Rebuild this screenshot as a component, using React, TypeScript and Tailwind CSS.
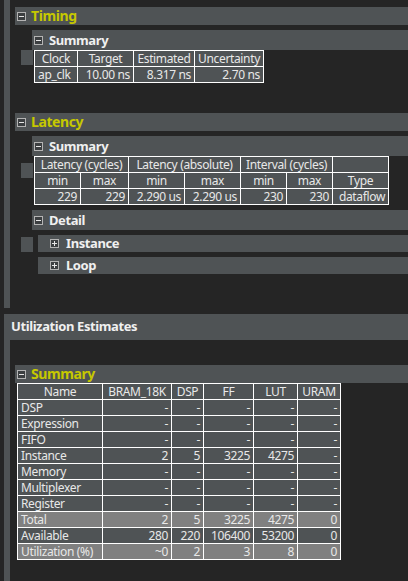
import React from 'react';

const font = { fontFamily: '"Noto Sans", "Liberation Sans", sans-serif' };

function Toggle({ open }: { open: boolean }) {
  return (
    <svg width="9" height="9" viewBox="0 0 9 9" className="shrink-0">
      <rect x="0.5" y="0.5" width="8" height="8" fill="#3c3f41" stroke="#b4b4b4" />
      <line x1="2" y1="4.5" x2="7" y2="4.5" stroke="#e6e6e6" />
      {!open && <line x1="4.5" y1="2" x2="4.5" y2="7" stroke="#e6e6e6" />}
    </svg>
  );
}

function SectionHead({ title }: { title: string }) {
  return (
    <div className="h-[18px] bg-[#4f5355] flex items-center pl-[2px]">
      <Toggle open />
      <span className="ml-[5px] text-[14px] font-bold leading-none tracking-[-0.4px] text-[#c6c800]">{title}</span>
    </div>
  );
}

function SubHead({ title }: { title: string }) {
  return (
    <div className="h-[20px] bg-[#4f5355] flex items-center pl-[2px]">
      <Toggle open />
      <span className="ml-[6px] text-[13px] font-bold text-[#f0f0f0] leading-none tracking-[-0.4px]">{title}</span>
    </div>
  );
}

function Cell({ children, align = 'r', light = false, span = false }: { children?: React.ReactNode; align?: 'l' | 'c' | 'r'; light?: boolean; span?: boolean }) {
  const a = align === 'l' ? 'text-left' : align === 'c' ? 'text-center' : 'text-right';
  return (
    <div className={`${light ? 'bg-[#808080]' : 'bg-[#4f5355]'} ${span ? 'col-span-2' : ''} ${a} h-[15px] leading-[15px] text-[12px] tracking-[-0.35px] px-[3px] text-[#e8e8e8] whitespace-nowrap overflow-hidden`}>
      {children}
    </div>
  );
}

const utilRows: [string, string, string, string, string, string, boolean][] = [
  ['DSP', '-', '-', '-', '-', '-', false],
  ['Expression', '-', '-', '-', '-', '-', false],
  ['FIFO', '-', '-', '-', '-', '-', false],
  ['Instance', '2', '5', '3225', '4275', '-', false],
  ['Memory', '-', '-', '-', '-', '-', false],
  ['Multiplexer', '-', '-', '-', '-', '-', false],
  ['Register', '-', '-', '-', '-', '-', false],
  ['Total', '2', '5', '3225', '4275', '0', true],
  ['Available', '280', '220', '106400', '53200', '0', false],
  ['Utilization (%)', '~0', '2', '3', '8', '0', true],
];

export default function App() {
  return (
    <div className="w-[408px] h-[581px] bg-[#252525] overflow-hidden" style={font}>
      {/* Performance block */}
      <div className="flex h-[308px]">
        <div className="ml-1 w-[6px] bg-[#4f5355]" />
        <div className="flex-1 pl-[5px] pt-[7px]">
          <SectionHead title="Timing" />
          <div className="mt-[5px] ml-[17px]">
            <SubHead title="Summary" />
          </div>
          <div className="flex items-start">
            <div className="ml-[6px] w-[12px] h-[15px] bg-[#4f5355]" />
            <div className="ml-px grid grid-cols-[42px_55px_60px_68px] gap-px p-px bg-white">
              <Cell align="c">Clock</Cell>
              <Cell align="c">Target</Cell>
              <Cell align="c">Estimated</Cell>
              <Cell align="c">Uncertainty</Cell>
              <Cell align="l">ap_clk</Cell>
              <Cell>10.00 ns</Cell>
              <Cell>8.317 ns</Cell>
              <Cell>2.70 ns</Cell>
            </div>
          </div>

          <div className="mt-[30px]">
            <SectionHead title="Latency" />
          </div>
          <div className="mt-[5px] ml-[17px]">
            <SubHead title="Summary" />
          </div>
          <div className="flex items-start">
            <div className="ml-[6px] mt-[7px] w-[12px] h-[15px] bg-[#4f5355]" />
            <div className="ml-px grid grid-cols-[45px_47px_55px_55px_45px_45px_55px] gap-px p-px bg-white">
              <Cell align="c" span>Latency (cycles)</Cell>
              <Cell align="c" span>Latency (absolute)</Cell>
              <Cell align="c" span>Interval (cycles)</Cell>
              <Cell />
              <Cell align="c">min</Cell>
              <Cell align="c">max</Cell>
              <Cell align="c">min</Cell>
              <Cell align="c">max</Cell>
              <Cell align="c">min</Cell>
              <Cell align="c">max</Cell>
              <Cell align="c">Type</Cell>
              <Cell>229</Cell>
              <Cell>229</Cell>
              <Cell>2.290 us</Cell>
              <Cell>2.290 us</Cell>
              <Cell>230</Cell>
              <Cell>230</Cell>
              <Cell>dataflow</Cell>
            </div>
          </div>

          <div className="mt-[5px] ml-[17px]">
            <SubHead title="Detail" />
          </div>
          <div className="mt-[5px] flex items-start">
            <div className="ml-[6px] mt-[2px] w-[12px] h-[15px] bg-[#4f5355]" />
            <div className="ml-[5px] flex-1 h-[17px] bg-[#4f5355] flex items-center pl-[12px]">
              <Toggle open={false} />
              <span className="ml-[7px] text-[13px] font-bold text-[#f0f0f0] leading-none tracking-[-0.4px]">Instance</span>
            </div>
          </div>
          <div className="mt-[5px] ml-[23px] h-[17px] bg-[#4f5355] flex items-center pl-[12px]">
            <Toggle open={false} />
            <span className="ml-[7px] text-[13px] font-bold text-[#f0f0f0] leading-none tracking-[-0.4px]">Loop</span>
          </div>
        </div>
      </div>

      {/* Utilization */}
      <div className="mt-[6px] ml-1 h-[26px] bg-[#4f5355] flex items-center pl-[7px]">
        <span className="text-[13px] font-bold text-[#f0f0f0] tracking-[-0.4px]">Utilization Estimates</span>
      </div>
      <div className="flex h-[241px]">
        <div className="ml-1 w-[6px] bg-[#4f5355]" />
        <div className="flex-1 pl-[5px] pt-[25px]">
          <SectionHead title="Summary" />
          <div className="ml-[2px] w-fit grid grid-cols-[84px_68px_31px_49px_43px_42px] gap-px p-px bg-white">
            <Cell align="c">Name</Cell>
            <Cell align="c">BRAM_18K</Cell>
            <Cell align="c">DSP</Cell>
            <Cell align="c">FF</Cell>
            <Cell align="c">LUT</Cell>
            <Cell align="c">URAM</Cell>
            {utilRows.map((r) => (
              <React.Fragment key={r[0]}>
                <Cell align="l" light={r[6]}>{r[0]}</Cell>
                <Cell light={r[6]}>{r[1]}</Cell>
                <Cell light={r[6]}>{r[2]}</Cell>
                <Cell light={r[6]}>{r[3]}</Cell>
                <Cell light={r[6]}>{r[4]}</Cell>
                <Cell light={r[6]}>{r[5]}</Cell>
              </React.Fragment>
            ))}
          </div>
        </div>
      </div>
    </div>
  );
}
